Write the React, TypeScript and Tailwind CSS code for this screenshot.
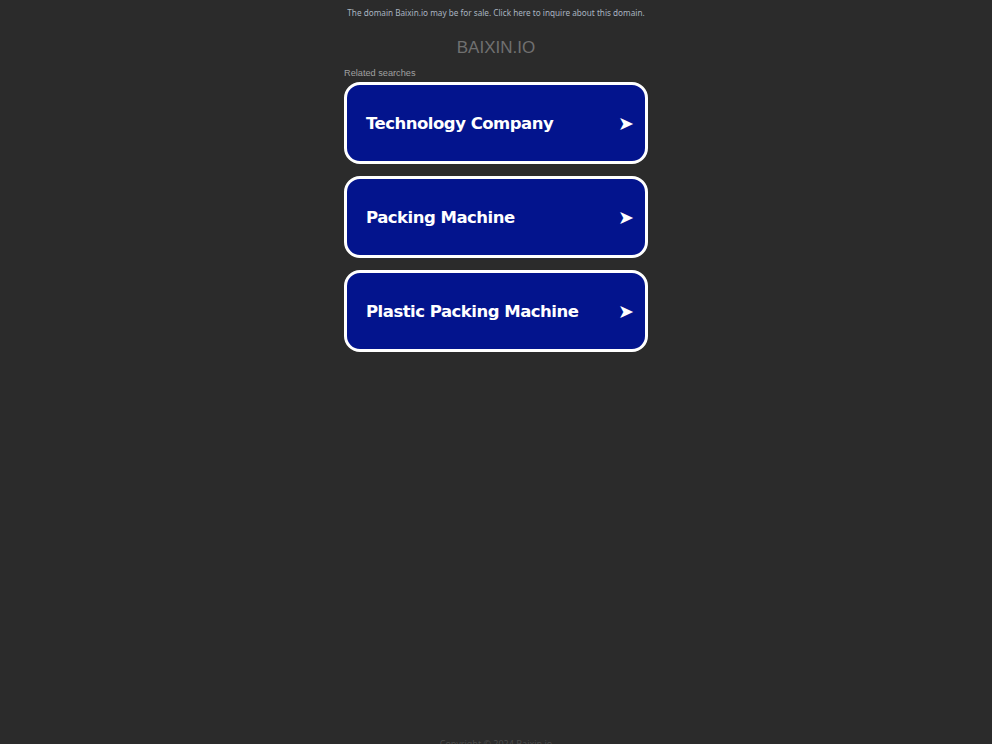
const searches = ["Technology Company", "Packing Machine", "Plastic Packing Machine"];

export default function App() {
  return (
    <div className="flex h-[744px] flex-col overflow-hidden bg-[#2b2b2b]">
      <div className="pt-[7px] text-center text-[8.2px] leading-[12px] text-[#a9b4c0] [font-family:'Noto_Sans',sans-serif]">
        The domain Baixin.io may be for sale. Click here to inquire about this domain.
      </div>

      <div className="mt-[18px] text-center text-[17px] leading-[22px] text-[#707070] [font-family:'Liberation_Sans',Arial,sans-serif]">
        BAIXIN.IO
      </div>

      <div className="mx-auto mt-[8px] w-[304px]">
        <div className="text-[9.2px] leading-[12px] text-[#a0a0a0] [font-family:'Liberation_Sans',Arial,sans-serif]">
          Related searches
        </div>
        <div className="mt-[3px] flex flex-col gap-[12px]">
          {searches.map((s) => (
            <a
              key={s}
              href="#"
              className="flex h-[82px] items-center justify-between rounded-[16px] border-[3px] border-white bg-[#03148d] pl-[19px] pr-[11px] text-white"
            >
              <span className="pt-[2px] text-[16.5px] font-bold tracking-[-0.5px] [font-family:'DejaVu_Sans',Verdana,sans-serif]">{s}</span>
              <span className="text-[19px] leading-none [font-family:'DejaVu_Sans',sans-serif]">➤</span>
            </a>
          ))}
        </div>
      </div>

      <div className="mt-auto translate-y-[6px] text-center text-[9px] leading-[12px] text-[#4a4a4a] [font-family:'Noto_Sans',sans-serif]">
        Copyright © 2024 Baixin.io
      </div>
    </div>
  );
}
